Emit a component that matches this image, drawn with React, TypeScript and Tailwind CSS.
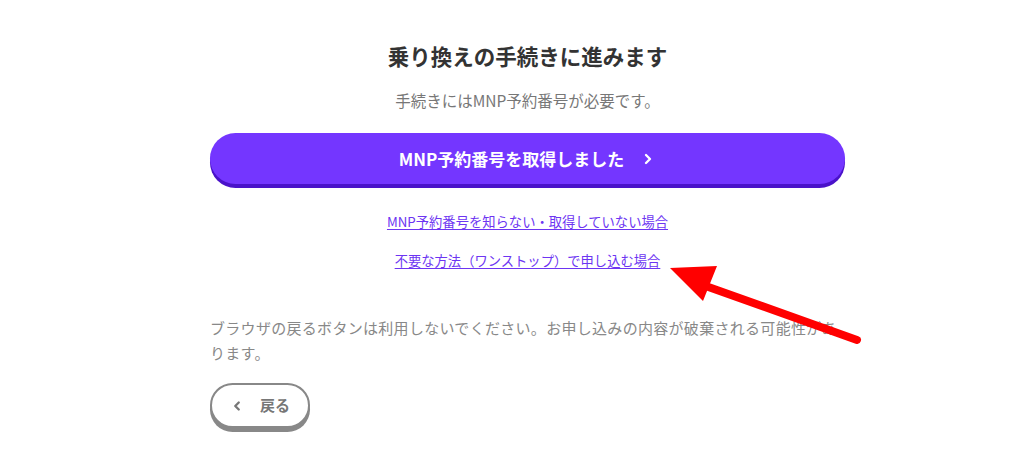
import { ChevronRight, ChevronLeft } from 'lucide-react';

export default function App() {
  return (
    <div className="relative w-[1024px] h-[468px] overflow-hidden bg-white font-['Noto_Sans_CJK_JP',sans-serif]">
      <div className="ml-[210px] w-[635px] pt-[40px] flex flex-col items-center">
        <h1 className="text-[21.5px] leading-[32px] font-bold text-[#333]">乗り換えの手続きに進みます</h1>
        <p className="mt-[17px] text-[15.5px] leading-[22px] text-[#777]">手続きにはMNP予約番号が必要です。</p>

        <button className="mt-[22px] w-full h-[51px] rounded-full bg-[#7436ff] shadow-[0_4px_0_#4a12c9] flex items-center justify-center gap-4 text-white text-[17px] font-bold">
          <span>MNP予約番号を取得しました</span>
          <ChevronRight size={16} strokeWidth={3.5} />
        </button>

        <a href="#" className="mt-[28px] text-[13.3px] leading-[20px] text-[#6d35f2] underline underline-offset-2">MNP予約番号を知らない・取得していない場合</a>
        <a href="#" className="mt-[19px] text-[13.3px] leading-[20px] text-[#6d35f2] underline underline-offset-2">不要な方法（ワンストップ）で申し込む場合</a>

        <p className="mt-[44px] self-stretch text-[15px] tracking-[0.3px] leading-[25px] text-[#888]">ブラウザの戻るボタンは利用しないでください。お申し込みの内容が破棄される可能性があります。</p>

        <div className="self-stretch mt-[18px]">
          <button className="w-[100px] h-[45px] rounded-full border-2 border-[#888] bg-white shadow-[0_4px_0_#888] flex items-center justify-center gap-4 text-[#777] text-[15px] font-bold">
            <ChevronLeft size={14} strokeWidth={4} />
            <span>戻る</span>
          </button>
        </div>
      </div>

      <svg className="absolute left-0 top-0" width="1024" height="468" viewBox="0 0 1024 468">
        <line x1="700" y1="284" x2="857" y2="340" stroke="#ff0000" strokeWidth="8" strokeLinecap="round" />
        <polygon points="670,268 717,266 703,301" fill="#ff0000" />
      </svg>
    </div>
  );
}
